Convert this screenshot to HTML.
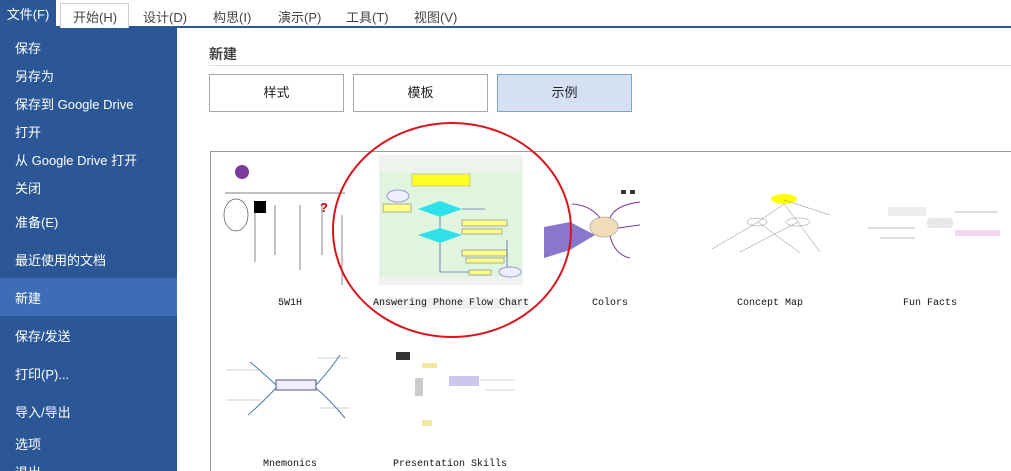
<!DOCTYPE html>
<html><head><meta charset="utf-8"><style>
*{margin:0;padding:0;box-sizing:border-box}
html,body{width:1011px;height:471px;overflow:hidden}
body{background:#fff;position:relative;font-family:"Liberation Sans","Noto Sans CJK SC",sans-serif}
.top{position:absolute;left:0;top:0;width:1011px;height:28px;background:#fff;border-bottom:2px solid #2b5797}
.tab{position:absolute;top:4px;font-size:13px;color:#444}
.file{position:absolute;left:0;top:0;width:56px;height:27px;background:#2b5797;color:#fff;font-size:13px;line-height:29px;text-align:center}
.home{position:absolute;left:60px;top:3px;width:69px;height:25px;border:1px solid #ccc;border-bottom:none;background:#fff}
.side{position:absolute;left:0;top:28px;width:177px;height:443px;background:#2b5797}
.it{position:absolute;left:15px;color:#fff;font-size:13px}
.sel{position:absolute;left:0;top:250px;width:177px;height:38px;background:#3e6db5}
.h{position:absolute;left:209px;top:44px;font-size:14px;font-weight:bold;color:#444}
.line{position:absolute;left:209px;top:65px;width:802px;height:1px;background:#ddd}
.btn{position:absolute;top:74px;width:135px;height:38px;border:1px solid #aaa;background:#fff;text-align:center;line-height:36px;font-size:13px;color:#222}
.gal{position:absolute;left:210px;top:151px;width:820px;height:340px;border:1px solid #999}
.lab{position:absolute;font-family:"Liberation Mono",monospace;font-size:10px;color:#111;white-space:nowrap}
</style></head><body>
<div class="top">
<div class="file">文件(F)</div>
<div class="home"></div>
<span class="tab" style="left:73px;top:7px">开始(H)</span>
<span class="tab" style="left:143px;top:7px">设计(D)</span>
<span class="tab" style="left:213px;top:7px">构思(I)</span>
<span class="tab" style="left:278px;top:7px">演示(P)</span>
<span class="tab" style="left:346px;top:7px">工具(T)</span>
<span class="tab" style="left:414px;top:7px">视图(V)</span>
</div>
<div class="side">
<div class="sel"></div>
</div>
<span class="it" style="top:38px">保存</span>
<span class="it" style="top:66px">另存为</span>
<span class="it" style="top:94px">保存到 Google Drive</span>
<span class="it" style="top:122px">打开</span>
<span class="it" style="top:150px">从 Google Drive 打开</span>
<span class="it" style="top:178px">关闭</span>
<span class="it" style="top:212px">准备(E)</span>
<span class="it" style="top:250px">最近使用的文档</span>
<span class="it" style="top:288px">新建</span>
<span class="it" style="top:326px">保存/发送</span>
<span class="it" style="top:364px">打印(P)...</span>
<span class="it" style="top:402px">导入/导出</span>
<span class="it" style="top:434px">选项</span>
<span class="it" style="top:462px">退出</span>
<div class="h">新建</div>
<div class="line"></div>
<div class="btn" style="left:209px">样式</div>
<div class="btn" style="left:353px">模板</div>
<div class="btn" style="left:497px;background:#d5e1f2;border-color:#7da2ce">示例</div>
<div class="gal"></div>
<svg style="position:absolute;left:0;top:0" width="1011" height="471">
<g stroke="#555" fill="none" stroke-width="0.7">
<line x1="225" y1="193" x2="345" y2="193"/>
<ellipse cx="236" cy="215" rx="12" ry="16"/>
<line x1="255" y1="205" x2="255" y2="262"/><line x1="275" y1="205" x2="275" y2="255"/><line x1="300" y1="205" x2="300" y2="270"/><line x1="322" y1="205" x2="322" y2="255"/><line x1="342" y1="215" x2="342" y2="285"/>
</g>
<rect x="254" y="201" width="12" height="12" fill="#000"/><text x="320" y="212" fill="#c00" font-size="13" font-weight="bold">?</text>
<circle cx="242" cy="172" r="7" fill="#7a3b9a"/>
<rect x="379" y="155" width="144" height="130" fill="#eef3ee"/>
<rect x="380" y="172" width="142" height="105" fill="#dff5df"/>
<rect x="412" y="174" width="58" height="12" fill="#ffff22" stroke="#cc9"/>
<ellipse cx="398" cy="196" rx="11" ry="6" fill="#eef" stroke="#99c"/>
<rect x="383" y="204" width="28" height="8" fill="#ffff88" stroke="#aa9"/>
<polygon points="418,209 440,201 462,209 440,217" fill="#2ee0ea"/>
<polygon points="418,235 440,228 462,235 440,243" fill="#2ee0ea"/>
<rect x="462" y="220" width="45" height="6" fill="#ffff88" stroke="#aa9"/>
<rect x="462" y="229" width="40" height="5" fill="#ffff88" stroke="#aa9"/>
<rect x="462" y="250" width="45" height="6" fill="#ffff88" stroke="#aa9"/>
<rect x="466" y="258" width="38" height="5" fill="#ffff88" stroke="#aa9"/>
<rect x="469" y="270" width="22" height="5" fill="#ffff88" stroke="#aa9"/>
<ellipse cx="510" cy="272" rx="11" ry="5" fill="#eef" stroke="#99c"/>
<g stroke="#339" stroke-width="0.6"><line x1="440" y1="217" x2="440" y2="228"/><line x1="462" y1="209" x2="485" y2="209"/><line x1="440" y1="243" x2="440" y2="272"/><line x1="440" y1="272" x2="469" y2="272"/><line x1="507" y1="240" x2="507" y2="267"/></g>
<polygon points="544,227 570,222 595,235 570,250 544,258" fill="#8877cc"/>
<ellipse cx="604" cy="227" rx="14" ry="10" fill="#f0ddb8" stroke="#bba"/>
<path d="M572 204 Q590 205 600 218 M610 218 Q615 205 640 202 M618 228 L640 225 M610 236 Q615 255 630 258" stroke="#7a3b9a" fill="none"/>
<rect x="621" y="190" width="5" height="4" fill="#333"/><rect x="630" y="190" width="5" height="4" fill="#333"/>
<ellipse cx="784" cy="199" rx="13" ry="5" fill="#ff0"/>
<g stroke="#888" stroke-width="0.5" fill="none"><line x1="784" y1="204" x2="758" y2="222"/><line x1="784" y1="204" x2="798" y2="222"/><line x1="758" y1="222" x2="712" y2="249"/><line x1="758" y1="222" x2="800" y2="253"/><line x1="798" y1="222" x2="740" y2="252"/><line x1="798" y1="222" x2="820" y2="252"/><line x1="784" y1="200" x2="830" y2="215"/><ellipse cx="757" cy="222" rx="10" ry="4"/><ellipse cx="798" cy="222" rx="12" ry="4"/></g>
<rect x="888" y="207" width="38" height="9" fill="#eee"/><rect x="927" y="218" width="26" height="10" fill="#e8e8e8" rx="4"/>
<rect x="955" y="230" width="45" height="6" fill="#f2d7f2"/>
<g stroke="#bbb"><line x1="955" y1="212" x2="998" y2="212"/><line x1="868" y1="228" x2="915" y2="228"/><line x1="880" y1="238" x2="915" y2="238"/></g>
<rect x="276" y="380" width="40" height="10" fill="#eef" stroke="#557"/>
<path d="M276 385 Q260 370 250 362 M316 385 Q330 370 340 355 M276 388 Q260 405 248 415 M316 388 Q330 400 345 418" stroke="#4477aa" fill="none"/>
<g stroke="#999" stroke-width="0.5"><line x1="226" y1="370" x2="262" y2="370"/><line x1="226" y1="400" x2="262" y2="400"/><line x1="318" y1="358" x2="348" y2="358"/><line x1="320" y1="408" x2="350" y2="408"/></g>
<rect x="396" y="352" width="14" height="8" fill="#333"/>
<rect x="415" y="378" width="8" height="18" fill="#ccc"/>
<rect x="449" y="376" width="30" height="10" fill="#cdc6ef"/>
<rect x="422" y="363" width="15" height="5" fill="#f4e8a0"/>
<rect x="422" y="420" width="10" height="6" fill="#f4e8a0"/>
<g stroke="#aab" stroke-width="0.5"><line x1="480" y1="380" x2="515" y2="380"/><line x1="485" y1="390" x2="515" y2="390"/></g>
<ellipse cx="452" cy="230" rx="119" ry="107" fill="none" stroke="#d9141b" stroke-width="2"/>
</svg>
<div class="lab" style="left:278px;top:298px">5W1H</div>
<div class="lab" style="left:373px;top:298px;background:#f0f0f0">Answering Phone Flow Chart</div>
<div class="lab" style="left:592px;top:298px">Colors</div>
<div class="lab" style="left:737px;top:298px">Concept Map</div>
<div class="lab" style="left:903px;top:298px">Fun Facts</div>
<div class="lab" style="left:263px;top:459px">Mnemonics</div>
<div class="lab" style="left:393px;top:459px">Presentation Skills</div>
</body></html>
